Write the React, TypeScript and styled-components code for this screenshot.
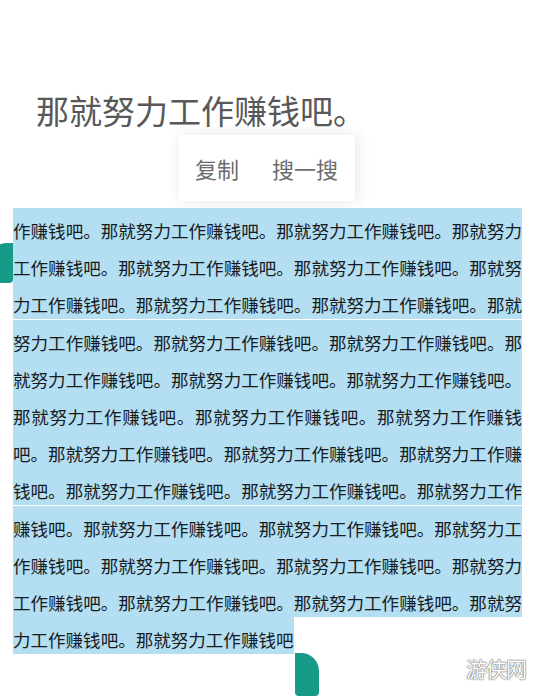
import styled, { createGlobalStyle } from 'styled-components';

const GlobalStyle = createGlobalStyle`
  html, body {
    margin: 0;
    padding: 0;
    background: #ffffff;
    overflow: hidden;
  }
  body {
    font-family: "Noto Sans CJK SC", "Noto Sans", sans-serif;
  }
`;

const Page = styled.div`
  position: relative;
  width: 542px;
  height: 696px;
  padding-top: 90px;
  box-sizing: border-box;
  overflow: hidden;
`;

const Heading = styled.h1`
  margin: 0 0 0 36px;
  font-size: 33px;
  line-height: 40px;
  font-weight: 400;
  color: #585858;
`;

const Menu = styled.div`
  display: flex;
  align-items: center;
  gap: 33px;
  width: 176px;
  height: 66px;
  margin: 5px 0 0 179px;
  padding: 0 17px 0 16px;
  box-sizing: border-box;
  background: #ffffff;
  box-shadow: 2px 0 14px rgba(0, 0, 0, 0.1);
`;

const MenuItem = styled.span`
  font-size: 22px;
  line-height: 1;
  color: #6b6b6b;
  white-space: nowrap;
`;

const Selection = styled.div`
  position: relative;
  margin: 11px 0 0 13px;
  width: 509px;
`;

const Paragraph = styled.p`
  margin: 0;
  font-size: 17.55px;
  line-height: 37.2px;
  color: #161b1e;
  text-align: justify;
  text-align-last: left;
`;

const Marked = styled.span`
  background: #b4def2;
  padding: 10px 0 2px;
`;

const Handle = styled.div<{ $side: 'start' | 'end' }>`
  position: absolute;
  width: 24px;
  background: #179a87;
  ${({ $side }) =>
    $side === 'start'
      ? `
    left: -24px;
    top: 31px;
    height: 40px;
    border-radius: 18px 0 4px 4px;
  `
      : `
    left: 282px;
    top: 441px;
    height: 43px;
    border-radius: 0 18px 4px 4px;
  `}
`;

const Watermark = styled.div`
  position: absolute;
  right: 16px;
  bottom: 17px;
  font-size: 21px;
  line-height: 1;
  letter-spacing: -1px;
  color: #ffffff;
  text-shadow: 0 0 1px #666, 0 0 1px #666, 0 0 2px #aaa;
`;

const UNIT = '那就努力工作赚钱吧。';

const buildText = (start: number, count: number) => {
  let out = '';
  for (let i = 0; i < count; i++) out += UNIT[(start + i) % UNIT.length];
  return out;
};

const App = () => {
  const body = buildText(5, 334);

  return (
    <>
      <GlobalStyle />
      <Page>
        <Heading>那就努力工作赚钱吧。</Heading>
        <Menu>
          <MenuItem>复制</MenuItem>
          <MenuItem>搜一搜</MenuItem>
        </Menu>
        <Selection>
          <Paragraph>
            <Marked>{body}</Marked>
          </Paragraph>
          <Handle $side='start' />
          <Handle $side='end' />
        </Selection>
        <Watermark>游侠网</Watermark>
      </Page>
    </>
  );
};

export default App;
